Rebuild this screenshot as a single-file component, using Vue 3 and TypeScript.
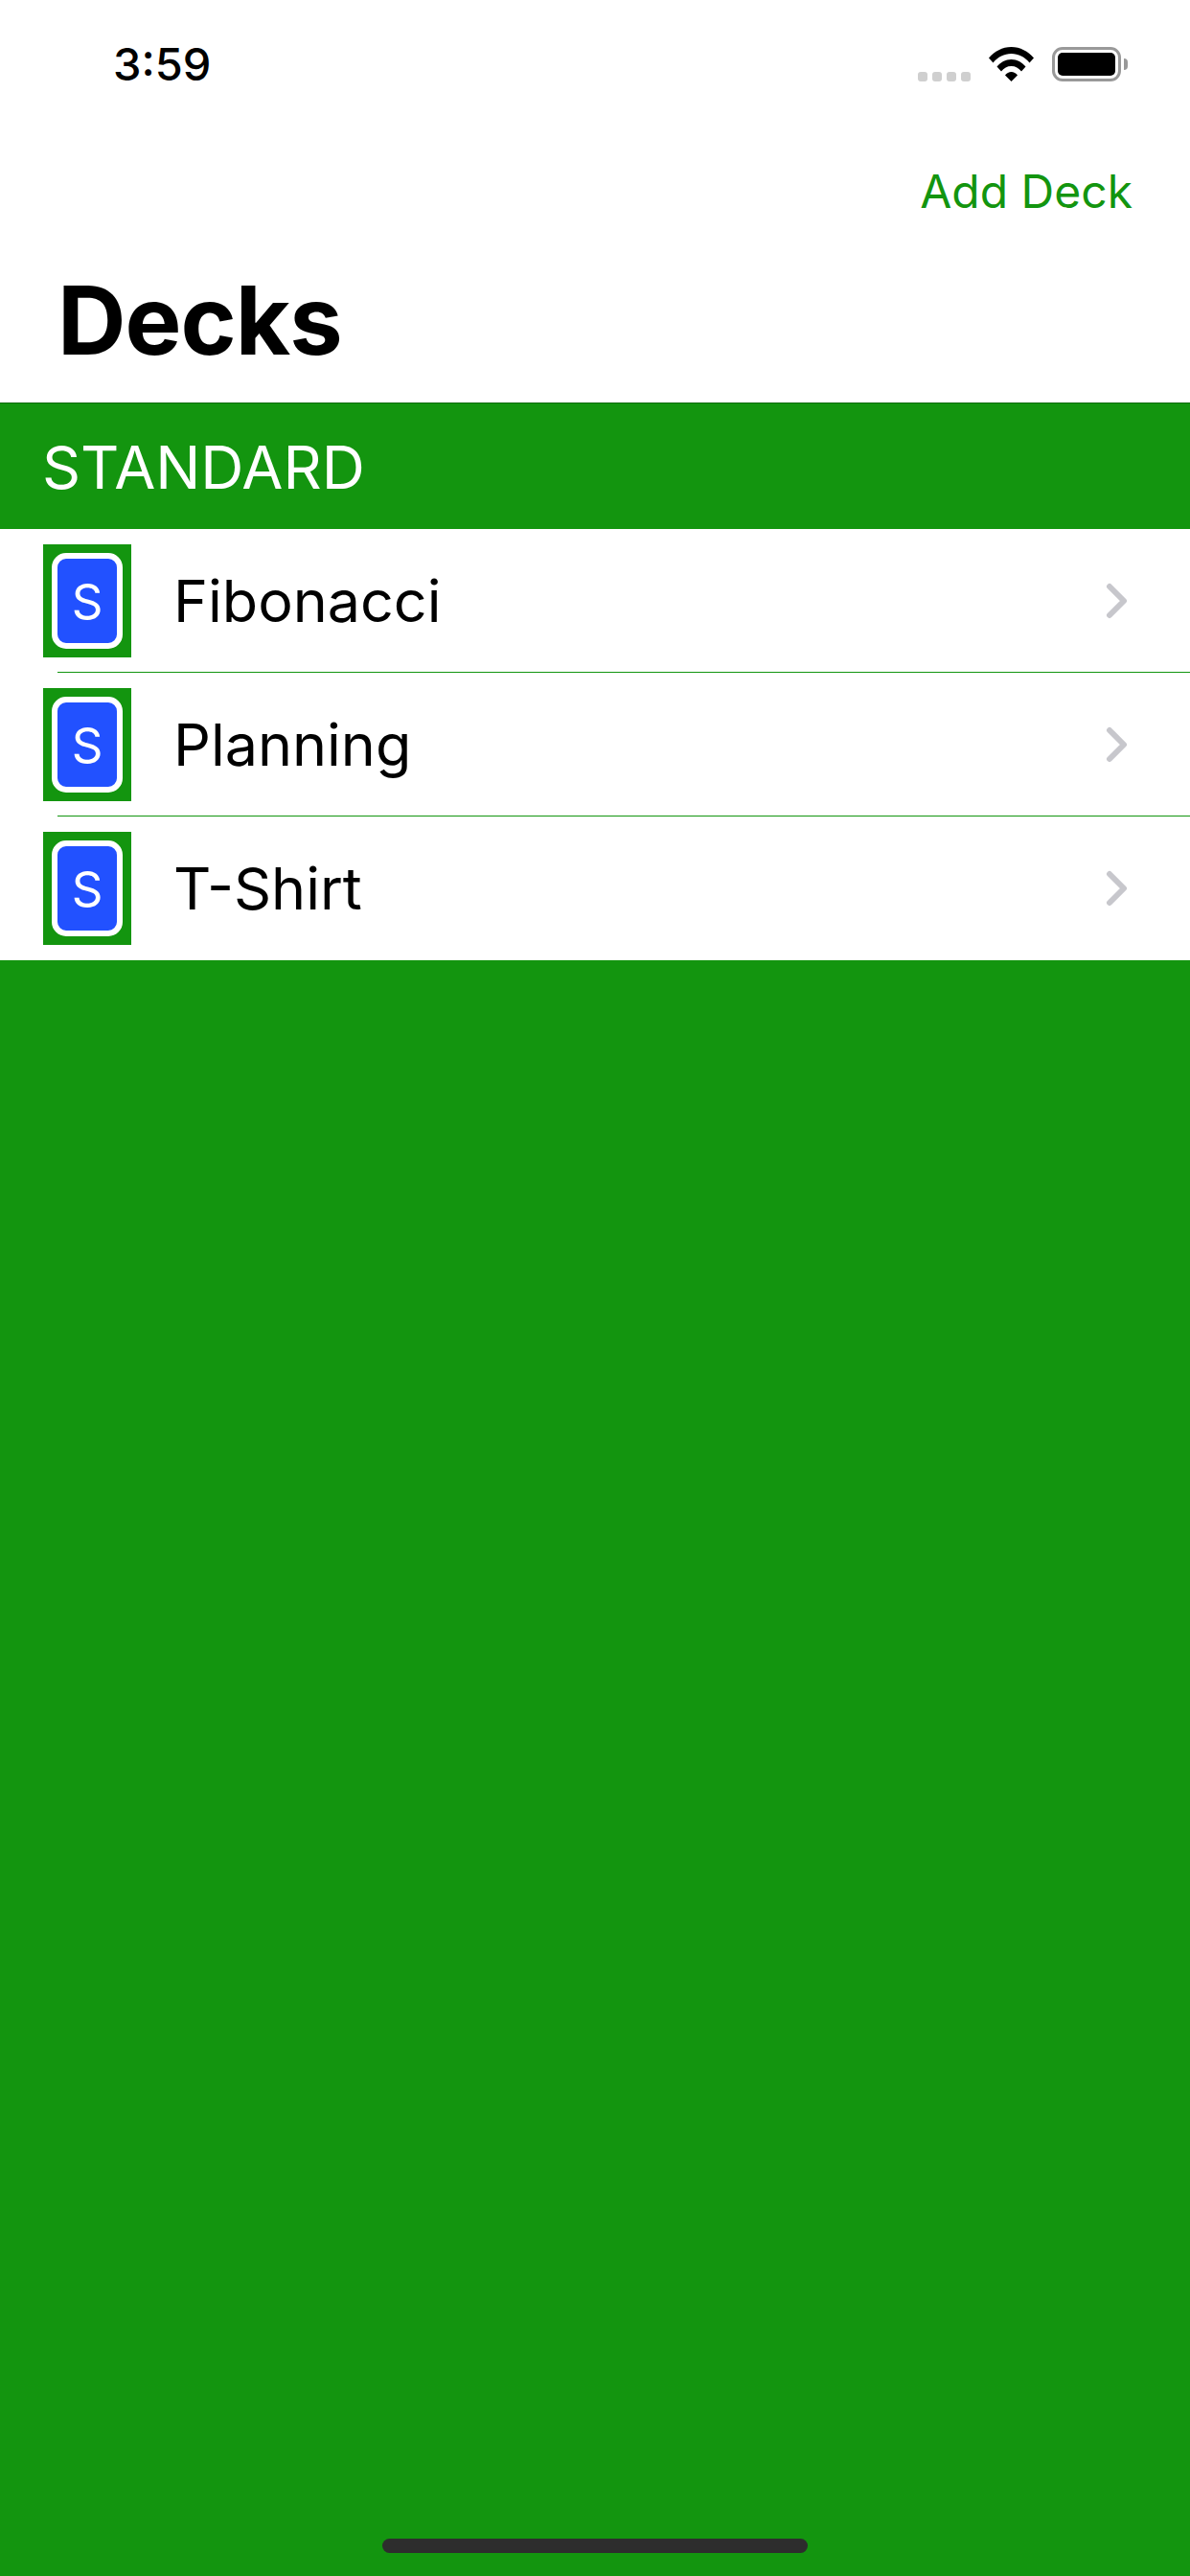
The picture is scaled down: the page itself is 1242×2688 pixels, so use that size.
<template>
  <div class="screen">
    <div class="status-bar">
      <span class="time">3:59</span>
      <div class="status-icons">
        <div class="signal">
          <i v-for="n in 4" :key="n"></i>
        </div>
        <svg class="wifi" width="47" height="36" viewBox="0 0 47 36">
          <path d="M0 11.500C6 4.500 14.200 0 23.500 0S41 4.500 47 11.500L42.500 16.500C37.500 10.500 31 7 23.500 7S9.500 10.500 4.500 16.500Z" />
          <path d="M8.500 20.500C12.200 16 17.500 13 23.500 13S34.800 16 38.500 20.500L34 25.500C31.300 22 27.700 20 23.500 20S15.700 22 13 25.500Z" />
          <path d="M17 29.500C18.700 27.500 21 26 23.500 26S28.300 27.500 30 29.500L23.500 36Z" />
        </svg>
        <div class="battery">
          <div class="battery-level"></div>
        </div>
      </div>
    </div>

    <div class="nav-bar">
      <button class="add-btn">Add Deck</button>
    </div>
    <h1 class="title">Decks</h1>

    <div class="content">
      <div class="section-header">STANDARD</div>
      <ul class="deck-list">
        <li v-for="deck in decks" :key="deck" class="deck-row">
          <div class="icon">
            <div class="card">S</div>
          </div>
          <div class="row-body">
            <span class="deck-name">{{ deck }}</span>
            <svg class="chevron" width="25" height="40" viewBox="0 0 25 40">
              <path d="M4 5L19 20L4 35" />
            </svg>
          </div>
        </li>
      </ul>
      <div class="home-area">
        <div class="home-bar"></div>
      </div>
    </div>
  </div>
</template>

<script setup lang="ts">
const decks: string[] = ['Fibonacci', 'Planning', 'T-Shirt'];
</script>

<style>
html, body { margin: 0; background: #fff; }
</style>

<style scoped>
.screen { width: 1242px; height: 2688px; display: flex; flex-direction: column; font-family: Inter, "Liberation Sans", sans-serif; background: #fff; overflow: hidden; }

.status-bar { height: 132px; box-sizing: border-box; padding: 49px 72px 0 118px; display: flex; justify-content: space-between; align-items: flex-start; flex-shrink: 0; }
.time { font-size: 47px; line-height: 36px; font-weight: 500; color: #000; }
.status-icons { display: flex; align-items: flex-start; }
.signal { display: flex; gap: 5px; margin-top: 26px; margin-right: 19px; }
.signal i { width: 10px; height: 10px; border-radius: 3px; background: #cfcfcf; display: block; }
.wifi { fill: #000; margin-right: 19px; }
.battery { width: 72px; height: 36px; box-sizing: border-box; border: 3px solid #999; border-radius: 11px; padding: 3px; position: relative; }
.battery::after { content: ""; position: absolute; right: -10px; top: 9px; width: 4px; height: 12px; background: #999; border-radius: 0 6px 6px 0; }
.battery-level { height: 100%; background: #000; border-radius: 5px; }

.nav-bar { height: 134px; display: flex; justify-content: flex-end; align-items: center; padding-right: 60px; flex-shrink: 0; }
.add-btn { border: none; background: none; padding: 0; font-family: inherit; font-size: 48px; color: #13950f; }

.title { margin: 0; height: 154px; box-sizing: border-box; padding: 6px 0 0 60px; font-size: 99px; line-height: 124px; font-weight: 700; color: #000; flex-shrink: 0; letter-spacing: -1px; }

.content { flex: 1; display: flex; flex-direction: column; background: #13950f; }
.section-header { height: 132px; box-sizing: border-box; border-top: 1px solid #0e6b0b; padding-left: 44px; display: flex; align-items: center; font-size: 62.500px; color: #fff; flex-shrink: 0; }

.deck-list { list-style: none; margin: 0; padding: 0; background: #fff; }
.deck-row { height: 150px; box-sizing: border-box; padding-left: 45px; display: flex; align-items: flex-start; position: relative; }
.icon { width: 92px; height: 118px; margin-top: 16px; background: #13950f; display: flex; align-items: center; justify-content: center; flex-shrink: 0; }
.card { width: 74px; height: 100px; box-sizing: border-box; border: 6px solid #fff; border-radius: 15px; background: #2251ff; color: #fff; font-size: 51px; display: flex; align-items: center; justify-content: center; }
.row-body { flex: 1; display: flex; align-items: center; justify-content: space-between; height: 150px; padding: 0 63px 0 44px; }
.deck-name { font-size: 61px; color: #000; }
.chevron { fill: none; stroke: #c7c7cc; stroke-width: 6px; stroke-linecap: round; stroke-linejoin: round; }
.deck-row:not(:last-child)::after { content: ""; position: absolute; left: 60px; right: 0; bottom: 0; height: 1px; background: #13950f; }

.home-area { flex: 1; display: flex; align-items: flex-end; justify-content: center; padding-bottom: 24px; }
.home-bar { width: 444px; height: 15px; border-radius: 8px; background: #2d2d2d; }
</style>
